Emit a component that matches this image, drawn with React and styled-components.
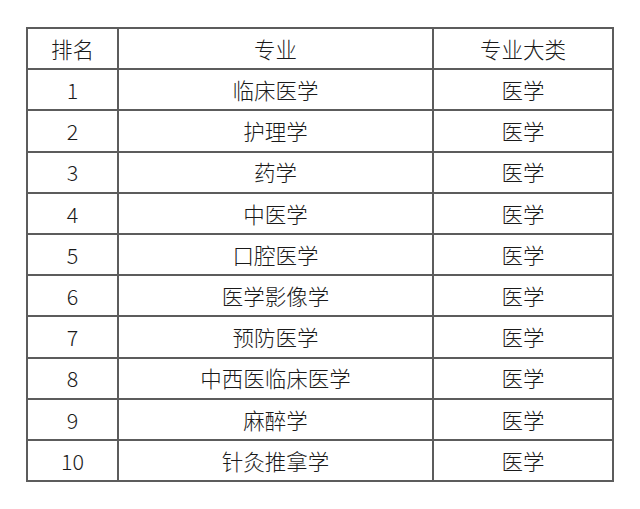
import styled, { createGlobalStyle } from "styled-components";

const GlobalStyle = createGlobalStyle`
  html, body {
    margin: 0;
    padding: 0;
    background: #ffffff;
  }
`;

const Page = styled.div`
  width: 640px;
  height: 509px;
  padding: 27px 0 0 26px;
  box-sizing: border-box;
  background: #ffffff;
`;

const Table = styled.table`
  border-collapse: collapse;
  table-layout: fixed;
  font-family: "PingFang SC", "Noto Sans CJK SC", "Noto Sans", sans-serif;
  font-size: 21.5px;
  font-weight: 300;
  color: #1a1a1a;
`;

const Cell = styled.td`
  border: 2px solid #5c5c5c;
  height: 39.2px;
  padding: 0;
  text-align: center;
  vertical-align: middle;
  line-height: 1;
  width: ${(props) => props.w}px;
`;

const rows = [
  ["1", "临床医学", "医学"],
  ["2", "护理学", "医学"],
  ["3", "药学", "医学"],
  ["4", "中医学", "医学"],
  ["5", "口腔医学", "医学"],
  ["6", "医学影像学", "医学"],
  ["7", "预防医学", "医学"],
  ["8", "中西医临床医学", "医学"],
  ["9", "麻醉学", "医学"],
  ["10", "针灸推拿学", "医学"],
];

const App = () => {
  return (
    <Page>
      <GlobalStyle />
      <Table>
        <tbody>
          <tr>
            <Cell w={89}>排名</Cell>
            <Cell w={313}>专业</Cell>
            <Cell w={178}>专业大类</Cell>
          </tr>
          {rows.map((r) => (
            <tr key={r[0]}>
              <Cell w={89}>{r[0]}</Cell>
              <Cell w={313}>{r[1]}</Cell>
              <Cell w={178}>{r[2]}</Cell>
            </tr>
          ))}
        </tbody>
      </Table>
    </Page>
  );
};

export default App;
